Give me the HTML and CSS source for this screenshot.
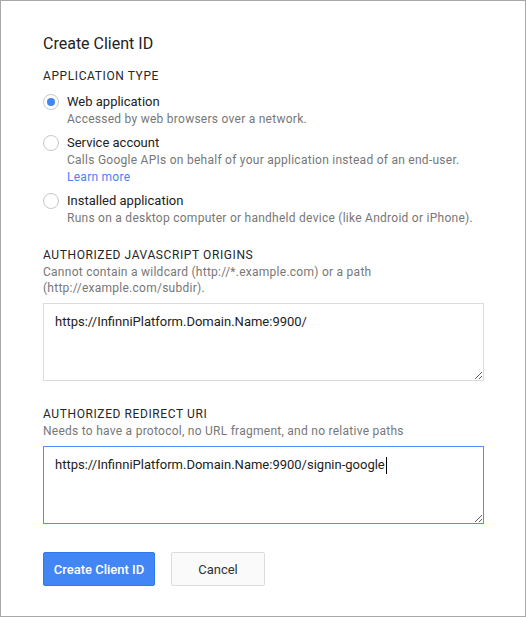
FILE: index.html
```html
<!DOCTYPE html>
<html lang="en">
<head>
<meta charset="utf-8">
<title>Create Client ID</title>
<link rel="stylesheet" href="styles.css">
</head>
<body>
<div class="dialog">
  <h1 class="title">Create Client ID</h1>

  <div class="section-label">Application type</div>
  <div class="options">
    <label class="option">
      <span class="radio checked"></span>
      <span class="option-text">
        <span class="option-name">Web application</span>
        <span class="desc">Accessed by web browsers over a network.</span>
      </span>
    </label>
    <label class="option">
      <span class="radio"></span>
      <span class="option-text">
        <span class="option-name">Service account</span>
        <span class="desc">Calls Google APIs on behalf of your application instead of an end-user.</span>
        <a class="link" href="#">Learn more</a>
      </span>
    </label>
    <label class="option">
      <span class="radio"></span>
      <span class="option-text">
        <span class="option-name">Installed application</span>
        <span class="desc">Runs on a desktop computer or handheld device (like Android or iPhone).</span>
      </span>
    </label>
  </div>

  <div class="field-group origins">
    <div class="section-label">Authorized JavaScript origins</div>
    <div class="desc">Cannot contain a wildcard (http://*.example.com) or a path<br>(http://example.com/subdir).</div>
    <div class="field">https://InfinniPlatform.Domain.Name:9900/</div>
  </div>

  <div class="field-group redirect">
    <div class="section-label">Authorized redirect URI</div>
    <div class="desc">Needs to have a protocol, no URL fragment, and no relative paths</div>
    <div class="field focused">https://InfinniPlatform.Domain.Name:9900/signin-google<span class="caret"></span></div>
  </div>

  <div class="actions">
    <button class="btn primary">Create Client ID</button>
    <button class="btn secondary">Cancel</button>
  </div>
</div>
</body>
</html>
```

FILE: styles.css
```css
* { box-sizing: border-box; }
html, body { margin: 0; padding: 0; background: #fff; }
body {
  font-family: Roboto, "Liberation Sans", Arial, sans-serif;
  color: #222;
}
.dialog {
  width: 526px;
  height: 617px;
  border: 1px solid #a8a8a8;
  padding: 33px 0 0 42px;
  overflow: hidden;
}
.title {
  margin: 0;
  font-size: 16px;
  line-height: 20px;
  font-weight: 400;
  color: #222;
}
.section-label {
  text-transform: uppercase;
  font-size: 12px;
  line-height: 17px;
  letter-spacing: 0.6px;
  color: #262626;
}
.dialog > .section-label { margin-top: 14px; }
.options {
  display: flex;
  flex-direction: column;
  gap: 6px;
  margin-top: 8px;
}
.option {
  display: flex;
  align-items: flex-start;
  gap: 8px;
  cursor: pointer;
}
.radio {
  flex: none;
  width: 16px;
  height: 16px;
  margin-top: 1px;
  border-radius: 50%;
  border: 1px solid #c8c8c8;
  background: #fff;
  display: flex;
  align-items: center;
  justify-content: center;
}
.radio.checked::after {
  content: "";
  width: 8px;
  height: 8px;
  border-radius: 50%;
  background: #4285f4;
}
.option-text {
  display: flex;
  flex-direction: column;
}
.option-name {
  font-size: 13px;
  line-height: 18px;
  color: #222;
}
.desc {
  font-size: 12px;
  line-height: 16px;
  letter-spacing: 0.26px;
  color: #777;
}
.option-text .desc { line-height: 17px; }
.link {
  font-size: 12px;
  line-height: 17px;
  letter-spacing: 0.26px;
  color: #4285f4;
  text-decoration: none;
}
.field-group { display: flex; flex-direction: column; }
.origins { margin-top: 20px; }
.redirect { margin-top: 25px; }
.field {
  margin-top: 7px;
  width: 441px;
  height: 78px;
  border: 1px solid #dcdcdc;
  padding: 10px 11px;
  font-size: 13px;
  line-height: 16px;
  color: #222;
  resize: both;
  overflow: auto;
  outline: none;
}
.field.focused { border-color: #4d90fe; }
.caret {
  display: inline-block;
  width: 1px;
  height: 17px;
  margin-left: 1px;
  background: #000;
  vertical-align: top;
}
.actions {
  display: flex;
  gap: 16px;
  margin-top: 28px;
}
.btn {
  height: 34px;
  border-radius: 2px;
  font-family: Roboto, "Liberation Sans", Arial, sans-serif;
  font-size: 13px;
  padding: 0;
  cursor: pointer;
}
.primary {
  width: 112px;
  background: #4285f4;
  border: 1px solid #3079ed;
  color: #fff;
  font-weight: 500;
}
.secondary {
  width: 94px;
  background: #fafafa;
  border: 1px solid #dcdcdc;
  color: #333;
}
```
